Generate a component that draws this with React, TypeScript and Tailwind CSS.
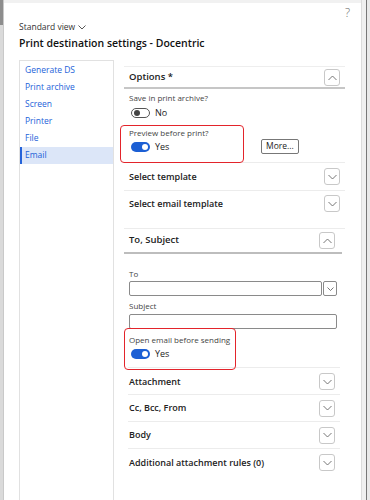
import React from 'react';

const font = { fontFamily: '"Open Sans", "Noto Sans", sans-serif' };

function Chevron({ up = false }: { up?: boolean }) {
  return (
    <div className="w-[16px] h-[17px] border border-[#c8c8c8] rounded-[3px] bg-white flex items-center justify-center">
      <svg width="9" height="6" viewBox="0 0 9 6" fill="none">
        {up ? (
          <polyline points="0.5,5 4.5,1 8.5,5" stroke="#666" strokeWidth="0.9" />
        ) : (
          <polyline points="0.5,1 4.5,5 8.5,1" stroke="#666" strokeWidth="0.9" />
        )}
      </svg>
    </div>
  );
}

function Toggle({ on, label }: { on: boolean; label: string }) {
  return (
    <div className="flex items-center h-[11px] pl-[2px]">
      {on ? (
        <div className="w-[19px] h-[10px] rounded-full bg-[#1c5fd4] flex items-center justify-end pr-[2px]">
          <div className="w-[6px] h-[6px] rounded-full bg-white" />
        </div>
      ) : (
        <div className="w-[19px] h-[10px] rounded-full border border-[#555] bg-white flex items-center pl-[2px]">
          <div className="w-[6px] h-[6px] rounded-full bg-[#444]" />
        </div>
      )}
      <span className="ml-[5px] text-[9px] text-[#222]">{label}</span>
    </div>
  );
}

function Row({ title, h = 'h-[27px]', border = true }: { title: string; h?: string; border?: boolean }) {
  return (
    <div className={`${h} flex items-center justify-between pl-[5px] pr-[5px] ${border ? 'border-b border-[#ececec]' : ''}`}>
      <span className="text-[9px] font-semibold text-[#222]">{title}</span>
      <Chevron />
    </div>
  );
}

export default function App() {
  const nav = ['Generate DS', 'Print archive', 'Screen', 'Printer', 'File', 'Email'];
  return (
    <div className="w-[370px] h-[500px] flex overflow-hidden bg-white" style={font}>
      {/* page behind the dialog, left */}
      <div className="w-[4px] flex flex-col border-r border-[#c9c9c9]">
        <div className="h-[25px] bg-[#8d8d8d]" />
        <div className="flex-1 bg-[#dadada]" />
      </div>

      {/* dialog */}
      <div className="flex-1 flex flex-col bg-white border-t-[3px] border-[#f1f1f1]">
        <div className="h-[16px] flex items-end justify-end pr-[11px]">
          <span className="text-[12px] leading-none text-[#666] font-light">?</span>
        </div>

        <div className="pl-[15px]">
          <div className="h-[12px] mt-[2px] flex items-center text-[8.5px] text-[#333]">
            Standard view
            <svg width="8" height="5" viewBox="0 0 8 5" fill="none" className="ml-[3px]">
              <polyline points="0.5,0.5 4,4 7.5,0.5" stroke="#444" strokeWidth="0.9" />
            </svg>
          </div>
          <div className="h-[16px] mt-[3px] flex items-center text-[10.5px] font-semibold text-[#111]">
            Print destination settings - Docentric
          </div>
        </div>

        <div className="flex flex-1 mt-[8px] pl-[15px]">
          {/* left navigation */}
          <div className="w-[95px] border border-b-0 border-[#e1e1e1] pt-[1px]">
            {nav.map((n) => (
              <div
                key={n}
                className={`h-[17px] flex items-center pl-[3px] text-[8.5px] text-[#2563d9] border-l-2 ${
                  n === 'Email' ? 'bg-[#dce6f8] border-[#2563d9]' : 'border-transparent'
                }`}
              >
                {n}
              </div>
            ))}
          </div>

          {/* right content */}
          <div className="flex-1 pl-[10px] pr-[16px]">
            <div className="mt-[6px] h-[23px] pt-[1px] border-t border-b-2 border-t-[#eeeeee] border-b-[#c6c6c6] flex items-center justify-between pl-[5px] pr-[5px]">
              <span className="text-[9.5px] font-semibold text-[#222]">Options *</span>
              <Chevron up />
            </div>

            <div className="pl-[5px]">
              <div className="mt-[3px] h-[12px] flex items-center text-[8px] text-[#444]">Save in print archive?</div>
              <div className="mt-[3px]">
                <Toggle on={false} label="No" />
              </div>

              <div className="relative mt-[9px] flex items-end">
                <div className="w-[132px]">
                  <div className="h-[12px] flex items-center text-[8px] text-[#444]">Preview before print?</div>
                  <div className="mt-[2px]">
                    <Toggle on label="Yes" />
                  </div>
                </div>
                <div className="h-[15px] px-[4px] border border-[#777] rounded-[2px] flex items-center text-[8.5px] text-[#222] mb-[-2px]">
                  More...
                </div>
                <div className="absolute left-[-9px] top-[-2px] w-[124px] h-[38px] border-[1.5px] border-[#e3242b] rounded-[4px]" />
              </div>
            </div>

            <div className="mt-[10px] border-t border-[#ececec]" />
            <Row title="Select template" h="h-[28px]" />
            <div className="h-[38px] flex items-start justify-between pl-[5px] pr-[5px] pt-[4px] border-b border-[#ececec]">
              <span className="text-[9px] font-semibold text-[#222] leading-[18px]">Select email template</span>
              <Chevron />
            </div>

            <div className="mr-[3px]">
              <div className="h-[25px] border-b-2 border-[#bdbdbd] flex items-center justify-between pl-[5px] pr-[7px]">
                <span className="text-[9.5px] font-semibold text-[#222]">To, Subject</span>
                <Chevron up />
              </div>

              <div className="pl-[5px] pr-[5px]">
                <div className="mt-[14px] h-[12px] flex items-center text-[8px] text-[#444]">To</div>
                <div className="mt-[1px] flex h-[15px]">
                  <div className="flex-1 border border-[#8a8a8a] rounded-[2px]" />
                  <div className="w-[14px] border border-[#8a8a8a] rounded-[2px] ml-[1px] flex items-center justify-center">
                    <svg width="7" height="4" viewBox="0 0 7 4" fill="none">
                      <polyline points="0.5,0.5 3.5,3.5 6.5,0.5" stroke="#555" strokeWidth="0.8" />
                    </svg>
                  </div>
                </div>
                <div className="mt-[4px] h-[12px] flex items-center text-[8px] text-[#444]">Subject</div>
                <div className="mt-[2px] h-[15px] border border-[#8a8a8a] rounded-[2px]" />

                <div className="relative mt-[5px] pb-[8px]">
                  <div className="h-[12px] flex items-center text-[8px] text-[#444]">Open email before sending</div>
                  <div className="mt-[2px]">
                    <Toggle on label="Yes" />
                  </div>
                  <div className="absolute left-[-5px] top-[-6px] w-[112px] h-[42px] border-[1.5px] border-[#e3242b] rounded-[4px]" />
                </div>
              </div>

              <div className="ml-[4px] mr-[2px] border-t border-[#ececec]">
                <div className="h-[27px] flex items-center justify-between pl-[1px] pr-[5px] pt-[1px] border-b border-[#ececec]">
                  <span className="text-[9px] font-semibold text-[#222]">Attachment</span>
                  <Chevron />
                </div>
                <div className="h-[27px] flex items-center justify-between pl-[1px] pr-[5px] border-b border-[#ececec]">
                  <span className="text-[9px] font-semibold text-[#222]">Cc, Bcc, From</span>
                  <Chevron />
                </div>
                <div className="h-[27px] flex items-center justify-between pl-[1px] pr-[5px] border-b border-[#ececec]">
                  <span className="text-[9px] font-semibold text-[#222]">Body</span>
                  <Chevron />
                </div>
                <div className="h-[27px] flex items-center justify-between pl-[1px] pr-[5px]">
                  <span className="text-[9px] font-semibold text-[#222]">Additional attachment rules (0)</span>
                  <Chevron />
                </div>
              </div>
            </div>
          </div>
        </div>
      </div>

      {/* page behind the dialog, right */}
      <div className="w-[9px] flex">
        <div className="w-[5px] bg-[#f0f0f0] border-l border-[#dcdcdc]" />
        <div className="w-[1px] bg-[#777]" />
        <div className="flex-1 bg-[#e9e9e9]" />
      </div>
    </div>
  );
}
